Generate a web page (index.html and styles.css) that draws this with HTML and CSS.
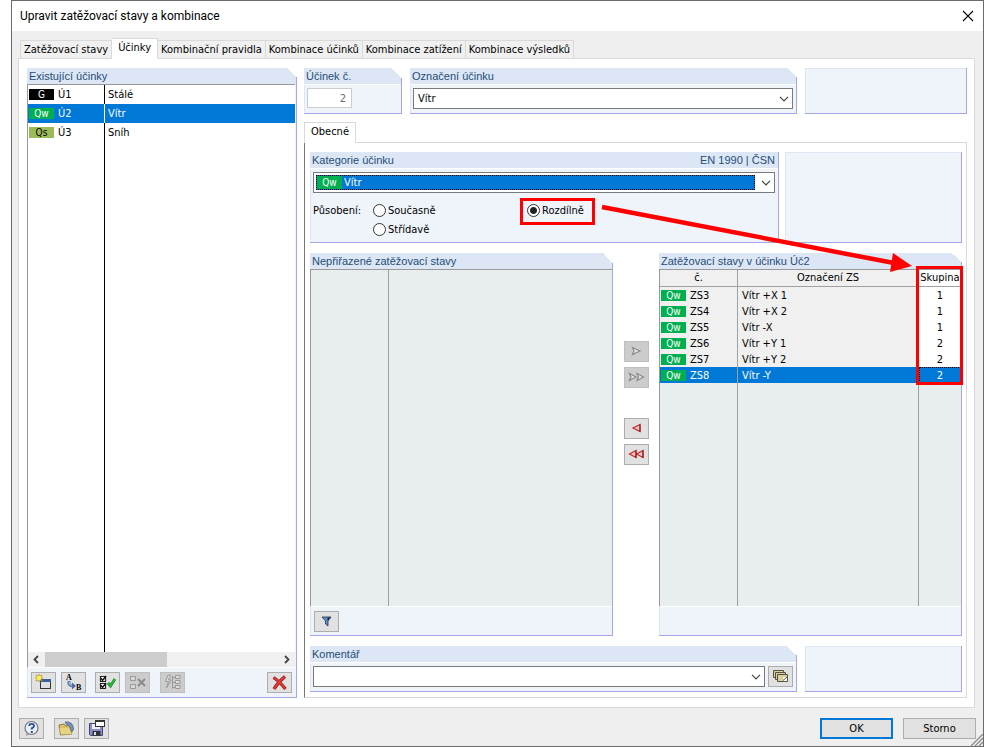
FILE: index.html
```html
<!DOCTYPE html>
<html lang="cs">
<head>
    <meta charset="UTF-8">
    <meta name="viewport" content="width=device-width, initial-scale=1">
    <title>Upravit zatěžovací stavy a kombinace</title>
    <link rel="stylesheet" href="styles.css">
</head>
<body>

<div class="dialog">
    <header class="titlebar">
        <h1>Upravit zatěžovací stavy a kombinace</h1>
        <button class="close" aria-label="Zavřít">
            <svg width="12" height="12" viewBox="0 0 12 12"><path d="M1 1 L11 11 M11 1 L1 11" stroke="#000" stroke-width="1.1"/></svg>
        </button>
    </header>

    <nav class="tabs">
        <button class="tab">Zatěžovací stavy</button>
        <button class="tab active">Účinky</button>
        <button class="tab">Kombinační pravidla</button>
        <button class="tab">Kombinace účinků</button>
        <button class="tab">Kombinace zatížení</button>
        <button class="tab">Kombinace výsledků</button>
    </nav>

    <main class="page">
        <!-- seznam účinků -->
        <section class="panel cut actions">
            <h2>Existující účinky</h2>
            <div class="list">
                <table>
                    <tr><td><span class="badge black">G</span>Ú1</td><td>Stálé</td></tr>
                    <tr class="selected"><td><span class="badge green">Qw</span>Ú2</td><td>Vítr</td></tr>
                    <tr><td><span class="badge olive">Qs</span>Ú3</td><td>Sníh</td></tr>
                </table>
            </div>
            <div class="scrollbar">
                <svg width="16" height="15" viewBox="0 0 16 15"><path d="M10 4 L6.500 7.500 L10 11" fill="none" stroke="#444" stroke-width="1.800"/></svg>
                <div class="track"><div class="thumb"></div></div>
                <svg width="16" height="15" viewBox="0 0 16 15"><path d="M6 4 L9.500 7.500 L6 11" fill="none" stroke="#444" stroke-width="1.800"/></svg>
            </div>
            <div class="toolbar">
                <button class="tool" aria-label="Nový">
                    <svg width="17" height="17" viewBox="0 0 17 17">
                        <rect x="5.500" y="5.500" width="10" height="9" fill="#dedede" stroke="#333"/>
                        <rect x="5" y="5" width="11" height="3" fill="#3d5f9e"/>
                        <path d="M4 0 V8 M0 4 H8 M1 1 L7 7 M7 1 L1 7" stroke="#b09a20" stroke-width="1.200"/>
                        <circle cx="4" cy="4" r="2.300" fill="#fff04a"/>
                    </svg>
                </button>
                <button class="tool" aria-label="Přečíslovat">
                    <svg width="19" height="19" viewBox="0 0 19 19">
                        <text x="2" y="7" class="glyph">A</text>
                        <text x="12" y="17" class="glyph">B</text>
                        <path d="M5 8 Q4 13 10 13" fill="none" stroke="#4a6da8" stroke-width="3"/>
                        <path d="M5 8.500 Q5 12.500 10 12.500" fill="none" stroke="#a9c0e6" stroke-width="1.200"/>
                        <path d="M8 9.500 L12 13 L8 16.500 Z" fill="#4a6da8"/>
                    </svg>
                </button>
                <button class="tool gap-check" aria-label="Vybrat vše">
                    <svg width="17" height="17" viewBox="0 0 17 17">
                        <path d="M1.500 2.500 H6.500 V7.500 H1.500 Z M1.500 9.500 H6.500 V14.500 H1.500 Z" fill="#fff" stroke="#222" stroke-width="1.200"/>
                        <path d="M2 4 L3.500 6.500 L7 2 M2 11 L3.500 13.500 L7 9" fill="none" stroke="#111" stroke-width="1.400"/>
                        <path d="M9 9 L11.500 12 L16 5" fill="none" stroke="#127a1e" stroke-width="2.800"/>
                        <path d="M9 9 L11.500 12 L16 5" fill="none" stroke="#22c636" stroke-width="1.400"/>
                    </svg>
                </button>
                <button class="tool off" disabled aria-label="Zrušit výběr">
                    <svg width="17" height="17" viewBox="0 0 17 17">
                        <path d="M1.500 2.500 H6.500 V6.500 H1.500 Z M1.500 10.500 H6.500 V14.500 H1.500 Z" fill="#d6d6d6" stroke="#999"/>
                        <path d="M9 5 L16 12 M16 5 L9 12" stroke="#8b8b8b" stroke-width="2"/>
                    </svg>
                </button>
                <button class="tool off gap-tree" disabled aria-label="Struktura">
                    <svg width="17" height="17" viewBox="0 0 17 17">
                        <path d="M4 1 L1.500 7.500 H4.500 L2.500 14 L7 6 H4.500 L6.500 1 Z" fill="#ddd" stroke="#999"/>
                        <path d="M8.500 2 V14.500 M8.500 3.500 H11 M8.500 8.500 H11 M8.500 13.500 H11" stroke="#999"/>
                        <path d="M11.500 1.500 H16 V4.500 H11.500 Z M11.500 6.500 H16 V9.500 H11.500 Z M11.500 11.500 H16 V14.500 H11.500 Z" fill="#ddd" stroke="#999"/>
                    </svg>
                </button>
                <button class="tool last" aria-label="Smazat">
                    <svg width="17" height="17" viewBox="0 0 17 17">
                        <path d="M2.500 3.500 Q8 7 14.500 15 M14 2.500 Q7 8 3 15" fill="none" stroke="#8f1616" stroke-width="3.200"/>
                        <path d="M2.500 3.500 Q8 7 14.500 15 M14 2.500 Q7 8 3 15" fill="none" stroke="#e63a3a" stroke-width="1.600"/>
                    </svg>
                </button>
            </div>
        </section>

        <section class="detail">
            <div class="top-row">
                <div class="panel cut">
                    <h2><label for="number">Účinek č.</label></h2>
                    <div class="body"><input class="number" id="number" type="text" value="2" disabled></div>
                </div>
                <div class="panel cut">
                    <h2><label for="name">Označení účinku</label></h2>
                    <div class="body">
                        <div class="combo">
                            <select id="name"><option>Vítr</option></select>
                            <svg class="arrow" width="10" height="6" viewBox="0 0 10 6"><path d="M1 .8 L5 4.800 L9 .8" fill="none" stroke="#444" stroke-width="1.200"/></svg>
                        </div>
                    </div>
                </div>
                <div class="panel blank"></div>
            </div>

            <nav class="tabs sub">
                <button class="tab active">Obecné</button>
            </nav>

            <div class="subpage">
                <div class="category-row">
                    <div class="panel">
                        <h2><label for="category">Kategorie účinku</label><span>EN 1990 | ČSN</span></h2>
                        <div class="body">
                            <div class="combo focused">
                                <select id="category"><option>Vítr</option></select>
                                <span class="badge green">Qw</span>
                                <svg class="arrow" width="10" height="6" viewBox="0 0 10 6"><path d="M1 .8 L5 4.800 L9 .8" fill="none" stroke="#444" stroke-width="1.200"/></svg>
                            </div>
                            <div class="acting">
                                <span>Působení:</span>
                                <label><input type="radio" name="acting">Současně</label>
                                <label class="marked"><input type="radio" name="acting" checked>Rozdílně</label>
                                <label class="second"><input type="radio" name="acting">Střídavě</label>
                            </div>
                        </div>
                    </div>
                    <div class="panel blank"></div>
                </div>

                <div class="cases-row">
                    <div class="panel cut">
                        <h2>Nepřiřazené zatěžovací stavy</h2>
                        <div class="grid-area"></div>
                        <div class="toolbar">
                            <button class="tool" aria-label="Filtr">
                                <svg width="17" height="17" viewBox="0 0 17 17">
                                    <path d="M4 4 H13 L10 8 V13 L7.500 11 V8 Z" fill="#5d8fd6" stroke="#234" stroke-width=".8"/>
                                    <path d="M9.500 4.500 H12.500 L9.500 8 V12 Z" fill="#14233f"/>
                                </svg>
                            </button>
                        </div>
                    </div>

                    <div class="movers">
                        <button class="tool off" disabled aria-label="Přidat">
                            <svg width="17" height="17" viewBox="0 0 17 17"><path d="M4.500 4.500 L12 8 L4.500 11.500 L6 8 Z" fill="#e4e8e0" stroke="#8a8a86" stroke-width="1.200"/></svg>
                        </button>
                        <button class="tool off" disabled aria-label="Přidat vše">
                            <svg width="17" height="17" viewBox="0 0 17 17"><path d="M1.500 4.500 L8 8 L1.500 11.500 L3 8 Z M9 4.500 L15.500 8 L9 11.500 L10.500 8 Z" fill="#e4e8e0" stroke="#8a8a86" stroke-width="1.200"/></svg>
                        </button>
                        <button class="tool back" aria-label="Odebrat">
                            <svg width="17" height="17" viewBox="0 0 17 17"><path d="M12 4.500 L5 8 L12 11.500 Z" fill="#f6c4c4" stroke="#c02a2a" stroke-width="1.200"/><path d="M12 4.500 V12" stroke="#7d1f1f"/></svg>
                        </button>
                        <button class="tool" aria-label="Odebrat vše">
                            <svg width="17" height="17" viewBox="0 0 17 17"><path d="M8 4.500 L1.500 8 L8 11.500 Z M15 4.500 L8.500 8 L15 11.500 Z" fill="#f6c4c4" stroke="#c02a2a" stroke-width="1.200"/><path d="M8 4.500 V12 M15 4.500 V12" stroke="#7d1f1f"/></svg>
                        </button>
                    </div>

                    <div class="panel cut">
                        <h2>Zatěžovací stavy v účinku Úč2</h2>
                        <div class="grid-area assigned">
                            <table>
                                <thead>
                                    <tr><th>č.</th><th>Označení ZS</th><th>Skupina</th></tr>
                                </thead>
                                <tbody>
                                    <tr><td><span class="badge green">Qw</span>ZS3</td><td>Vítr +X 1</td><td>1</td></tr>
                                    <tr><td><span class="badge green">Qw</span>ZS4</td><td>Vítr +X 2</td><td>1</td></tr>
                                    <tr><td><span class="badge green">Qw</span>ZS5</td><td>Vítr -X</td><td>1</td></tr>
                                    <tr><td><span class="badge green">Qw</span>ZS6</td><td>Vítr +Y 1</td><td>2</td></tr>
                                    <tr><td><span class="badge green">Qw</span>ZS7</td><td>Vítr +Y 2</td><td>2</td></tr>
                                    <tr class="selected"><td><span class="badge green">Qw</span>ZS8</td><td>Vítr -Y</td><td>2</td></tr>
                                </tbody>
                            </table>
                            <div class="group-mark"></div>
                        </div>
                        <div class="toolbar"></div>
                    </div>
                </div>

                <div class="comment-row">
                    <div class="panel cut">
                        <h2><label for="comment">Komentář</label></h2>
                        <div class="body">
                            <div class="combo">
                                <select id="comment"><option></option></select>
                                <svg class="arrow" width="10" height="6" viewBox="0 0 10 6"><path d="M1 .8 L5 4.800 L9 .8" fill="none" stroke="#444" stroke-width="1.200"/></svg>
                            </div>
                            <button class="tool" aria-label="Převzít komentář">
                                <svg width="17" height="17" viewBox="0 0 17 17">
                                    <path d="M1.500 2.500 H11.500 V9.500 H1.500 Z" fill="#d9cfa0" stroke="#55523f"/>
                                    <path d="M3.500 4.500 H13.500 V11.500 H3.500 Z" fill="#d9cfa0" stroke="#55523f"/>
                                    <path d="M5.500 6.500 H15.500 V13.500 H5.500 Z" fill="#d9cfa0" stroke="#55523f"/>
                                    <path d="M11 9 H15 V13 H11 Z" fill="#fff"/><path d="M11 12.500 L15 9" stroke="#55523f"/>
                                </svg>
                            </button>
                        </div>
                    </div>
                    <div class="panel blank"></div>
                </div>
            </div>
        </section>
    </main>

    <footer class="buttons">
        <button class="tool" aria-label="Nápověda">
            <svg width="17" height="17" viewBox="0 0 17 17">
                <circle cx="8.500" cy="8" r="6.500" fill="#e9effa" stroke="#777" stroke-width="1.200"/>
                <path d="M4 12 L3 16 L7.500 14 Z" fill="#999"/>
                <path d="M6.200 6 Q6.200 3.800 8.600 3.800 Q11 3.800 11 6 Q11 7.300 8.700 8.300 V9.600" fill="none" stroke="#2c4f94" stroke-width="1.800"/>
                <rect x="7.800" y="11" width="2" height="2" fill="#2c4f94"/>
            </svg>
        </button>
        <button class="tool gap-open" aria-label="Otevřít">
            <svg width="17" height="17" viewBox="0 0 17 17">
                <path d="M7 2 Q15 1 15.500 9 L14 12 L11 8 Z" fill="#6f8fc4" stroke="#4b5f86" stroke-width=".8"/>
                <path d="M1 5 L6 4 L7.500 6 L11 5.500 L12 8 L14 14 L2.500 15 Z" fill="#d8c168" stroke="#7c6a28" stroke-width=".8"/>
                <path d="M1.500 8 H11 L14 14 L3 14.500 Z" fill="#e6d384"/>
            </svg>
        </button>
        <button class="tool gap-save" aria-label="Uložit">
            <svg width="17" height="17" viewBox="0 0 17 17">
                <path d="M1.500 3.500 H14.500 V15.500 H2.500 L1.500 14.500 Z" fill="#8d8ed0" stroke="#44456f"/>
                <rect x="4" y="4" width="8" height="5" fill="#eef0fa"/>
                <rect x="4.500" y="11" width="8" height="4.500" fill="#333"/><rect x="6" y="12" width="2" height="3" fill="#ddd"/>
                <rect x="7.500" y=".5" width="9" height="6" fill="#fff" stroke="#333"/><rect x="7" y="0" width="10" height="2" fill="#333"/>
            </svg>
        </button>
        <button class="push primary">OK</button>
        <button class="push">Storno</button>
    </footer>

    <svg class="grip" width="12" height="12" viewBox="0 0 12 12"><path d="M0 12 L12 0 M4 12 L12 4 M8 12 L12 8" stroke="#8a8a8a" stroke-width="1.300"/></svg>

    <!-- šipka od volby "Rozdílně" ke sloupci Skupina -->
    <svg class="pointer" width="312" height="70" viewBox="0 0 312 70">
        <path d="M2 5 L294 61" stroke="#f00" stroke-width="4.500"/>
        <path d="M293 51 L312 64 L290 70 Z" fill="#f00"/>
    </svg>
</div>

</body>
</html>
```
FILE: styles.css
```css
* {
    box-sizing: border-box;
}
body {
    margin: 0;
    background: #fff;
    color: #000;
    font: 11px/16px "DejaVu Sans Condensed", "Noto Sans", sans-serif;
}
button, input, select {
    font: inherit;
    color: inherit;
    margin: 0;
    padding: 0;
}
.dialog {
    position: relative;
    display: flex;
    flex-direction: column;
    min-height: 100vh;
    margin: 0 11px;
    background: #efefef;
    border: 1px solid #6b6b6b;
}

/* title */
.titlebar {
    display: flex;
    align-items: center;
    justify-content: space-between;
    height: 30px;
    padding: 0 9px 0 8px;
    background: #fff;
}
.titlebar h1 {
    margin: 0;
    font: 12px/16px Roboto, "Noto Sans", sans-serif;
}
.close {
    display: flex;
    border: 0;
    background: none;
}

/* tabs */
.tabs {
    display: flex;
    align-items: flex-end;
    height: 28px;
    padding-left: 8px;
    margin-bottom: -1px;
    z-index: 1;
}
.tab {
    height: 19px;
    padding: 0 3px;
    border: 1px solid #d9d9d9;
    border-left: 0;
    background: #f0f0f0;
    white-space: nowrap;
}
.tab:first-child {
    border-left: 1px solid #d9d9d9;
}
.tab.active {
    height: 21px;
    padding: 0 6px 2px;
    background: #fff;
    border-bottom-color: #fff;
}
.tabs.sub {
    height: 29px;
    padding: 0;
}

/* pages */
.page {
    flex: 1;
    display: grid;
    grid-template-columns: 270px 1fr;
    gap: 7px;
    margin: 0 8px 0 6px;
    padding: 9px 7px 9px 8px;
    background: #fff;
    border: 1px solid #d9d9d9;
}
.detail {
    display: flex;
    flex-direction: column;
}
.subpage {
    flex: 1;
    display: flex;
    flex-direction: column;
    gap: 10px;
    padding: 9px 4px 5px 5px;
    border: 1px solid #d9d9d9;
    border-left-color: #777;
}
.top-row, .category-row, .comment-row {
    display: grid;
    gap: 8px;
}
.top-row {
    grid-template-columns: 98px 1fr 162px;
    height: 46px;
}
.category-row {
    grid-template-columns: 1fr 177px;
    gap: 6px;
    height: 91px;
}
.cases-row {
    flex: 1;
    display: grid;
    grid-template-columns: 1fr 26px 1fr;
    gap: 10px;
}
.comment-row {
    grid-template-columns: 1fr 157px;
    height: 46px;
}

/* panels */
.panel {
    position: relative;
    display: flex;
    flex-direction: column;
    background: #eff3fa;
    border: solid #a5a5ea;
    border-width: 0 1px 1px 0;
    box-shadow: inset 1px 0 #dce6f4;
}
.panel.cut::after {
    content: "";
    position: absolute;
    top: 0;
    right: -1px;
    width: 10px;
    height: 10px;
    background: linear-gradient(to bottom left, #fff 50%, transparent 50%);
}
.panel.blank {
    box-shadow: inset 1px 1px #dce6f4;
}
.panel h2 {
    display: flex;
    justify-content: space-between;
    height: 16px;
    margin: 0;
    padding: 0 3px 0 2px;
    background: #dce6f4;
    color: #1f4e79;
    font: 11px/16px "Liberation Sans", Arial, sans-serif;
}
.body {
    flex: 1;
    display: flex;
    flex-wrap: wrap;
    align-content: flex-start;
    gap: 0 3px;
    padding: 3px;
    border-top: 1px solid #fff;
}

/* fields */
.number {
    width: 45px;
    height: 20px;
    padding-right: 5px;
    border: 1px solid #ccc;
    background: #fff;
    color: #6d6d6d;
    text-align: right;
}
.combo {
    position: relative;
    flex: 1;
    height: 21px;
}
.combo select {
    width: 100%;
    height: 21px;
    padding-left: 4px;
    appearance: none;
    border: 1px solid #7a7a7a;
    border-radius: 0;
    background: #fff;
}
.combo .arrow {
    position: absolute;
    right: 4px;
    top: 8px;
}
.combo.focused {
    flex: 1 0 100%;
}
.combo.focused select {
    padding: 0 0 0 30px;
    color: #fff;
    background: linear-gradient(#0078d7, #0078d7) 2px 2px / calc(100% - 21px) 15px no-repeat #fff;
}
.combo.focused::after {
    content: "";
    position: absolute;
    inset: 3px 20px 3px 3px;
    border: 1px dotted #000;
}
.combo.focused .badge {
    position: absolute;
    left: 4px;
    top: 4px;
    height: 13px;
    line-height: 13px;
}
.acting {
    flex: 1 0 100%;
    display: grid;
    grid-template-columns: 60px 154px 1fr;
    align-items: center;
    grid-auto-rows: 19px;
    padding-top: 8px;
}
.acting label {
    display: flex;
    align-items: center;
    gap: 2px;
    justify-self: start;
}
.acting .second {
    grid-column: 2;
}
.acting input {
    width: 13px;
    height: 13px;
    appearance: none;
    border: 1px solid #333;
    border-radius: 50%;
    background: #fff;
}
.acting input:checked {
    background: radial-gradient(circle, #222 3px, #fff 4px);
}
.marked {
    position: relative;
}
.marked::after {
    content: "";
    position: absolute;
    inset: -5px -11px -6px -7px;
    border: 3px solid #f00;
}

/* badges */
.badge {
    display: inline-block;
    width: 25px;
    height: 11px;
    margin-right: 4px;
    font-size: 10px;
    line-height: 11px;
    text-align: center;
    color: #fff;
}
.black {
    background: #000;
}
.green {
    background: #00b050;
}
.olive {
    background: #9bbb59;
    color: #000;
}

/* tables */
table {
    width: 100%;
    border-collapse: separate;
    border-spacing: 0;
    table-layout: fixed;
}
td, th {
    padding: 0;
    font-weight: normal;
    white-space: nowrap;
}
.list {
    flex: 1;
    margin-right: 1px;
    border-top: 1px solid #999;
    border-left: 1px solid #999;
    background: linear-gradient(#000, #000) 76px 0 / 1px 100% no-repeat #fff;
}
.list td {
    height: 19px;
    padding-left: 3px;
}
.list td:first-child {
    width: 77px;
    padding-left: 1px;
}
.list .selected td:first-child {
    border-right: 1px solid #fff;
}
.selected td {
    background: #0078d7;
    color: #fff;
}
.grid-area {
    position: relative;
    flex: 1;
    border-top: 1px solid #999;
    border-left: 1px solid #999;
    border-bottom: 1px solid #fff;
    background: linear-gradient(#a0a0a0, #a0a0a0) 77px 0 / 1px 100% no-repeat #e8eeee;
}
.grid-area.assigned {
    background:
        linear-gradient(#a0a0a0, #a0a0a0) 77px 0 / 1px 100% no-repeat,
        linear-gradient(#a0a0a0, #a0a0a0) calc(100% - 42px) 0 / 1px 100% no-repeat,
        #e8eeee;
}
.assigned th {
    height: 17px;
    background: #f0f0f0;
    border: solid #a0a0a0;
    border-width: 0 1px 1px 0;
}
.assigned th:first-child {
    width: 78px;
}
.assigned th:last-child {
    width: 42px;
    border-right: 0;
    background: #fff;
}
.assigned td {
    height: 16px;
    padding-left: 4px;
    line-height: 15px;
    background: #f0f0f0;
    border-right: 1px solid #a0a0a0;
}
.assigned td:first-child {
    padding-left: 1px;
}
.assigned td:last-child {
    padding: 0;
    background: #fff;
    border-right: 0;
    text-align: center;
}
.assigned .selected td, .assigned .selected td:last-child {
    background: #0078d7;
}
.assigned .selected td:last-child {
    outline: 1px dotted #000;
    outline-offset: -1px;
}
.group-mark {
    position: absolute;
    top: -4px;
    right: -2px;
    width: 47px;
    height: 119px;
    border: 3px solid #f00;
}

/* scrollbar */
.scrollbar {
    display: flex;
    height: 16px;
    margin: 0 1px 0 0;
    border-left: 1px solid #999;
    border-bottom: 1px solid #fff;
    background: #f0f0f0;
}
.track {
    flex: 1;
}
.thumb {
    width: 52%;
    height: 15px;
    margin-left: 1px;
    background: #cdcdcd;
}

/* tool buttons */
.toolbar {
    display: flex;
    align-items: center;
    gap: 5px;
    height: 28px;
    padding: 0 4px;
}
.actions .toolbar {
    height: 29px;
}
.tool {
    display: flex;
    align-items: center;
    justify-content: center;
    width: 25px;
    height: 21px;
    border: 1px solid #adadad;
    background: #e1e1e1;
}
.tool.off {
    background: #ccc;
    border-color: #bfbfbf;
}
.gap-check {
    margin-left: 4px;
}
.gap-tree {
    margin-left: 5px;
}
.last {
    margin-left: auto;
}
.glyph {
    font: bold 8px "Liberation Serif", serif;
}
.movers {
    display: flex;
    flex-direction: column;
    align-items: flex-end;
    gap: 5px;
    padding-top: 88px;
}
.back {
    margin-top: 25px;
}

/* bottom */
.buttons {
    display: flex;
    align-items: center;
    height: 38px;
    padding: 3px 7px 0;
}
.gap-open {
    margin-left: 10px;
}
.gap-save {
    margin-left: 5px;
}
.push {
    width: 73px;
    height: 21px;
    margin-left: 10px;
    border: 1px solid #adadad;
    background: #e1e1e1;
}
.push.primary {
    margin-left: auto;
    border: 2px solid #0078d7;
}
.grip {
    position: absolute;
    right: 0;
    bottom: 0;
}
.pointer {
    position: absolute;
    left: 588px;
    top: 201px;
    pointer-events: none;
}
```
